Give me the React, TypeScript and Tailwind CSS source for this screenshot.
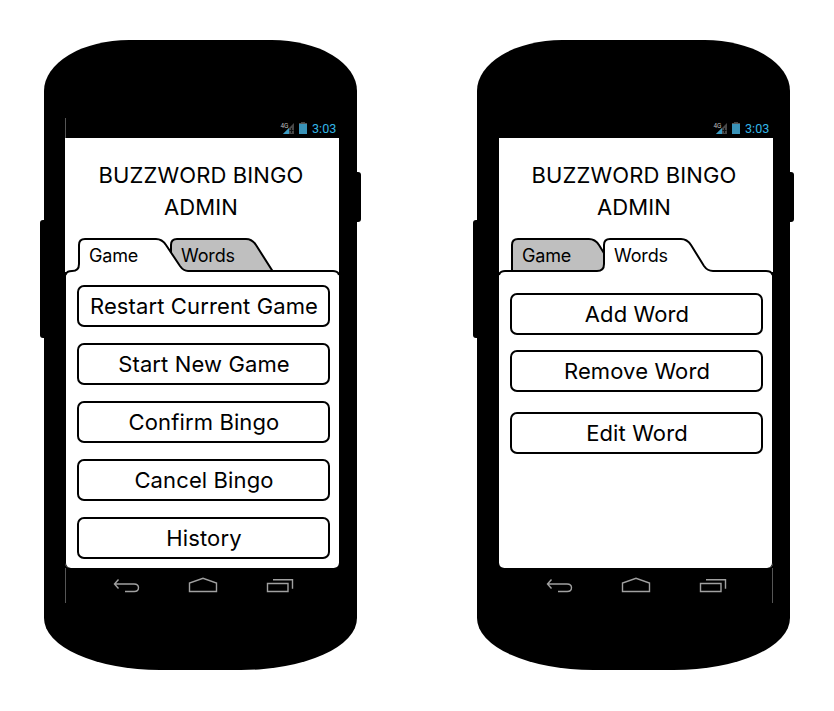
import type { ReactNode } from "react";

type TabName = "Game" | "Words";

function StatusBar({ active }: { active: TabName }) {
  return (
    <div className={`flex h-[20px] items-center justify-end ${active === "Game" ? "border-l border-[#555] pr-[3px]" : "pr-[4px]"}`}>
      <svg className="mt-[2px] h-[14px] w-[28px] shrink-0" viewBox="0 0 28 14" aria-hidden="true">
        <path d="M14 1V12H3Z" fill="#484848" />
        <path d="M9 6V12H3Z" fill="#3a9cc4" />
        <path d="M9.500 8.500h4M11.500 6v5" stroke="#111" strokeWidth="1" />
        <text x="0.500" y="5.500" fontSize="7" textLength="8" lengthAdjust="spacingAndGlyphs" fill="#bdbdbd" className="font-[Roboto,sans-serif]">4G</text>
        <rect x="21" y="0" width="4" height="1" fill="#444" />
        <rect x="19" y="1" width="8" height="11" fill="#3a93b8" />
        <rect x="19" y="1" width="8" height="1" fill="#555" />
      </svg>
      <span className="ml-[4px] w-[24px] pt-px font-[Roboto,sans-serif] text-[12.6px] leading-[20px] text-[#33b5e5]">3:03</span>
    </div>
  );
}

function Tabs({ active }: { active: TabName }) {
  return (
    <div className="relative h-[34px] w-[274px] shrink-0">
      <svg className="absolute top-0 left-0 h-[44px] w-[274px]" viewBox="0 0 274 44" fill="none" stroke="#000" strokeWidth="2" aria-hidden="true">
        {active === "Game" ? (
          <>
            <path d="M106 33V7Q106 1 112 1H181Q187 1 191 7L207.500 33Z" fill="#bfbfbf" />
            <path d="M1 44V39Q1 33 7 33Q14 33 14 26V7Q14 1 20 1H91Q97 1 101 7L115 28Q118.500 33 123 33V44Z" fill="#fff" stroke="none" />
            <path d="M0.500 37Q1.500 33 7 33Q14 33 14 26V7Q14 1 20 1H91Q97 1 101 7L115 28Q118.500 33 123 33H268Q273 33 274 37" />
          </>
        ) : (
          <>
            <path d="M13 33V7Q13 1 19 1H90Q96 1 100 7L116 33Z" fill="#bfbfbf" />
            <path d="M98 44V33Q105 33 105 26V7Q105 1 111 1H182Q188 1 192 7L205 28Q208.500 33 214 33V44Z" fill="#fff" stroke="none" />
            <path d="M0 37Q1 33 6 33H98Q105 33 105 26V7Q105 1 111 1H182Q188 1 192 7L205 28Q208.500 33 214 33H267Q272.500 33 273.500 37" />
          </>
        )}
      </svg>
      <div className={`relative flex pt-[5px] text-[18px] tracking-[-0.15px] leading-[26px] ${active === "Game" ? "pl-[24px]" : "pl-[23px]"}`}>
        <span className="w-[92px]">Game</span>
        <span>Words</span>
      </div>
    </div>
  );
}

function Action({ children, className = "" }: { children: ReactNode; className?: string }) {
  return (
    <button className={`flex h-[42px] w-[253px] shrink-0 items-center justify-center rounded-[7px] border-2 border-black pl-px text-[22px] tracking-[0.12px] leading-none whitespace-nowrap ${className}`}>
      {children}
    </button>
  );
}

function NavBar({ active }: { active: TabName }) {
  return (
    <div className={`h-[35px] border-[#555] ${active === "Game" ? "border-l" : "border-r"}`}>
      <svg className="h-[35px] w-[273px]" viewBox="0 0 273 35" fill="none" stroke="#a0a0a0" strokeWidth="1.400" aria-hidden="true">
        <path d="M52.500 11.500L48.500 16L52.500 20.500M48.500 16H68Q72.500 16 72.500 19.800T68 23.500H59" />
        <path d="M123.500 23.500V15L137 10.300L150.500 15V23.500Z" />
        <path d="M201.500 15.500H222V23.500H201.500ZM207 11.700H226.500V20.700" />
      </svg>
    </div>
  );
}

function Phone({ active, children }: { active: TabName; children: ReactNode }) {
  const first = active === "Game";
  return (
    <section className={`relative h-[630px] w-[313px] shrink-0 bg-black pt-[78px] [border-radius:85px_85px_116px_116px/51px_51px_52px_52px] ${first ? "pl-[21px]" : "pl-[22px]"}`}>
      <i className="absolute top-[180px] -left-[4px] h-[118px] w-[8px] rounded-[3px] bg-black" />
      <i className="absolute top-[132px] -right-[4px] h-[50px] w-[8px] rounded-[3px] bg-black" />
      <div className="w-[274px]">
        <StatusBar active={active} />
        <main className="flex h-[430px] flex-col bg-white rounded-b-[5px] overflow-hidden">
          <h1 className={`h-[100px] shrink-0 pt-[21px] text-center text-[22px] tracking-[0.12px] leading-[32px] ${first ? "pr-[2px]" : "pr-[4px]"}`}>BUZZWORD BINGO<br />ADMIN</h1>
          <Tabs active={active} />
          <div className={`flex min-h-0 grow bg-black ${first ? "pl-px" : "pr-px"}`}>
            <div className="flex grow flex-col items-start rounded-b-[5px] bg-white pl-[11px]">{children}</div>
          </div>
        </main>
        <NavBar active={active} />
      </div>
    </section>
  );
}

export default function App() {
  return (
    <div className="flex h-[711px] w-[834px] gap-[120px] overflow-hidden bg-white pt-[40px] pl-[44px] font-[Inter,sans-serif] text-black">
      <Phone active="Game">
        <Action className="mt-[13px]">Restart Current Game</Action>
        <Action className="mt-[16px]">Start New Game</Action>
        <Action className="mt-[16px]">Confirm Bingo</Action>
        <Action className="mt-[16px]">Cancel Bingo</Action>
        <Action className="mt-[16px]">History</Action>
      </Phone>
      <Phone active="Words">
        <Action className="mt-[21px]">Add Word</Action>
        <Action className="mt-[15px]">Remove Word</Action>
        <Action className="mt-[20px]">Edit Word</Action>
      </Phone>
    </div>
  );
}
